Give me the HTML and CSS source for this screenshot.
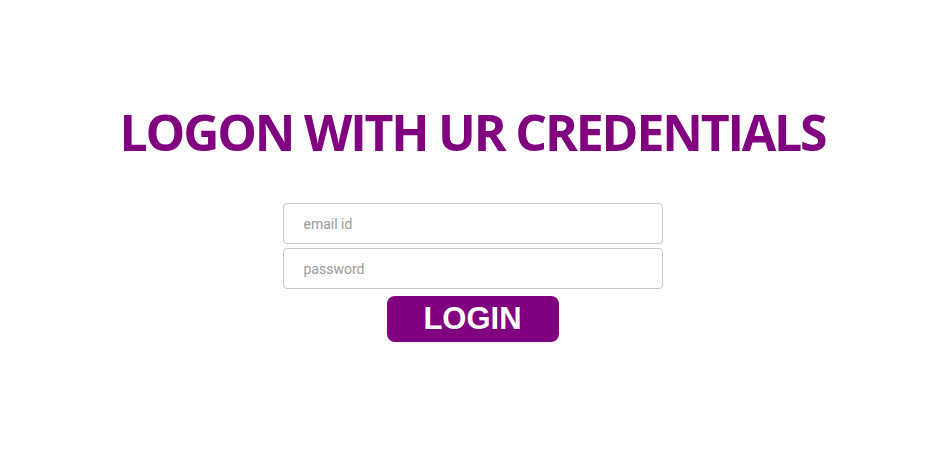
FILE: index.html
```html
<!DOCTYPE html>
<html>
<head>
<meta charset="utf-8">
<link rel="stylesheet" href="styles.css">
</head>
<body>
<main class="page">
  <h1 class="title">LOGON WITH UR CREDENTIALS</h1>
  <form class="form">
    <input class="field" type="text" placeholder="email id">
    <input class="field" type="password" placeholder="password">
    <button class="btn" type="button">LOGIN</button>
  </form>
</main>
</body>
</html>
```
FILE: styles.css
```css
html, body {
  margin: 0;
  padding: 0;
  background: #fff;
}
.page {
  display: flex;
  flex-direction: column;
  align-items: center;
  padding-top: 100px;
  padding-left: 5px;
}
.title {
  margin: 0;
  font-family: "Open Sans", Lato, sans-serif;
  font-weight: 700;
  font-size: 50px;
  line-height: 64px;
  letter-spacing: -2.2px;
  color: #800080;
}
.form {
  margin-top: 39px;
  display: flex;
  flex-direction: column;
  align-items: center;
  gap: 4px;
}
.field {
  box-sizing: border-box;
  width: 380px;
  height: 41px;
  border: 1px solid #c8c8c8;
  border-radius: 4px;
  padding: 0 20px;
  font-family: Roboto, "Liberation Sans", sans-serif;
  font-size: 14px;
  color: #555;
  outline: none;
}
.field::placeholder {
  color: #9a9a9a;
}
.btn {
  margin-top: 3px;
  width: 172px;
  height: 46px;
  border: none;
  border-radius: 8px;
  background: #800080;
  color: #fff;
  font-family: "Liberation Sans", Arial, sans-serif;
  font-weight: 700;
  font-size: 31px;
  padding: 0;
  cursor: pointer;
}
```
